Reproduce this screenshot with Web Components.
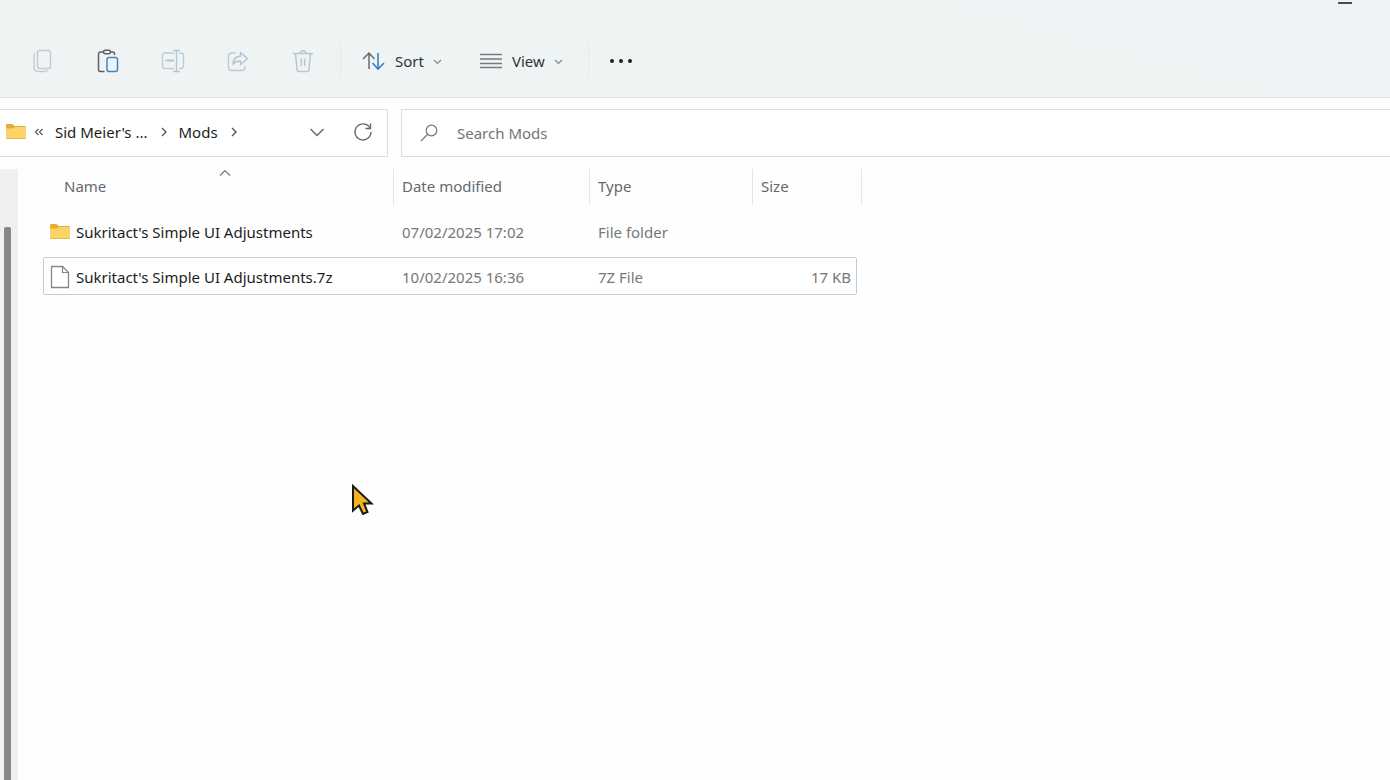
<!DOCTYPE html>
<html lang="en">
<head>
<meta charset="utf-8">
<title>Mods</title>
<style>
  html, body { margin: 0; height: 100%; }
  body { font: 15px/20px "Noto Sans", "Open Sans", sans-serif; color: #1c1c1c; background: #fefefe; overflow: hidden; }
</style>
</head>
<body>
<file-explorer></file-explorer>

<script>
const svg = (w, h, body, extra = "") =>
  `<svg width="${w}" height="${h}" viewBox="0 0 ${w} ${h}" fill="none" aria-hidden="true" ${extra}>${body}</svg>`;

const icons = {
  copy: svg(24, 24, `<g stroke="#bfcbd3" stroke-width="1.4"><rect x="6.500" y="1.500" width="13" height="18" rx="2"/><path d="M4 4.500C3.300 5 3 5.500 3 6.500V18.500C3 21 4.500 22.500 7 22.500H13.500C15 22.500 16 22 16.500 21"/></g>`),
  paste: svg(24, 24, `<g stroke-width="1.5"><path stroke="#5d6062" d="M7.500 3H4.500A2 2 0 0 0 2.500 5V20.500A2 2 0 0 0 4.500 22.500H8.500M14.500 3H16.500A2 2 0 0 1 18.500 5V6"/><rect stroke="#5d6062" x="7.500" y="1.300" width="7" height="3.400" rx="1.700"/><rect stroke="#3b86c8" x="11" y="8.500" width="10.500" height="14" rx="2"/></g>`),
  rename: svg(24, 24, `<g stroke="#bfccd8" stroke-width="1.4"><path d="M13 4H4A2.500 2.500 0 0 0 1.500 6.500V17A2.500 2.500 0 0 0 4 19.500H13M18 4H20A2.500 2.500 0 0 1 22.500 6.500V17A2.500 2.500 0 0 1 20 19.500H18"/><path stroke-width="2" stroke="#b2c4d4" d="M4.500 11.500H13"/><path stroke="#b3c6da" d="M15.500 2V22M12 1.500H19M12 22.500H19"/></g>`),
  share: svg(24, 24, `<g stroke="#bfcbd3" stroke-width="1.400" stroke-linejoin="round"><path d="M10 4H5.500A3 3 0 0 0 2.500 7V18.500A3 3 0 0 0 5.500 21.500H16A3 3 0 0 0 19 18.500V17"/><path stroke="#b0c4d2" d="M14.500 3.500L21.500 9.500L14.500 15.500V12C11 12 8.500 13 7 15.500C7.200 10.500 10 7.300 14.500 7Z"/></g>`),
  trash: svg(24, 24, `<g stroke="#bcc6ca" stroke-width="1.500" stroke-linecap="round"><path d="M2.500 4.500H21.500M9 4.500C9 .8 15 .8 15 4.500M4.500 5L6 20A2.500 2.500 0 0 0 8.500 22.500H15.500A2.500 2.500 0 0 0 18 20L19.500 5M10.300 10V16.500M13.700 10V16.500"/></g>`),
  sort: svg(24, 24, `<path stroke="#656b70" stroke-width="1.500" d="M7 20V4M1 10L7 4L12.500 10"/><path stroke="#3581c6" stroke-width="1.600" d="M16 4V20M10.500 14L16 20L22 14"/>`),
  view: svg(24, 24, `<path stroke="#777b7e" stroke-width="1.500" d="M1 5.500H23M1 10H23M1 14.500H23M1 18.500H23"/>`),
  more: svg(24, 24, `<g fill="#202020"><circle cx="3" cy="12" r="2"/><circle cx="12" cy="12" r="2"/><circle cx="21" cy="12" r="2"/></g>`),
  tiny: svg(9, 9, `<path stroke="#85898b" stroke-width="1.200" d="M1 3L4.500 6.500L8 3"/>`, `class="tiny"`),
  down: svg(16, 16, `<path stroke="#686868" stroke-width="1.400" d="M1.500 5L8 11.500L14.500 5"/>`),
  up: svg(12, 8, `<path stroke="#777" stroke-width="1.200" d="M1 6.500L6 1.500L11 6.500"/>`),
  right: svg(8, 10, `<path stroke="#555" stroke-width="1.400" d="M2 1L6 5L2 9"/>`),
  back: svg(10, 10, `<path stroke="#555" stroke-width="1.200" d="M4.500 2L1.500 5L4.500 8M8.500 2L5.500 5L8.500 8"/>`),
  refresh: svg(20, 20, `<path stroke="#686868" stroke-width="1.400" d="M17 6A8 8 0 1 0 18 10M17.500 1.500V6.500H12.500"/>`),
  search: svg(18, 18, `<circle cx="11.500" cy="6.500" r="5.300" stroke="#777" stroke-width="1.200"/><path stroke="#777" stroke-width="1.200" d="M7.500 10.500L1 17"/>`),
  folder: svg(20, 18, `<path fill="#e3ae35" d="M0 2.500C0 1.500.5 1 1.500 1H6.500L8.500 3H18.500C19.500 3 20 3.500 20 4.500V8H0Z"/><path fill="#f9d567" d="M0 5.500H7L9 4H19C19.600 4 20 4.400 20 5V15C20 15.600 19.600 16 19 16H1C.4 16 0 15.600 0 15Z"/><path stroke="#e9bb46" d="M.5 15.500H19.500"/>`),
  file: svg(20, 24, `<path fill="#fff" stroke="#85888b" stroke-width="1.300" d="M1.500 1.500H12.500L18.500 7.500V22.500H1.500Z"/><path stroke="#85888b" stroke-width="1.200" d="M12.500 1.500V7.500H18.500"/>`),
  cursor: svg(24, 32, `<path fill="#f4b41c" stroke="#191919" stroke-width="2" d="M2 3V27.500L8 22.500L12 31L16.500 29L13 20.500H20.500Z"/>`)
};

const define = (name, html) => customElements.define(name, class extends HTMLElement {
  constructor() {
    super();
    const t = document.createElement("template");
    t.innerHTML = `<style>
      svg { display: block; flex: none; }
      button { font: inherit; color: inherit; background: none; border: 0; padding: 0; margin: 0; display: flex; align-items: center; }
    </style>` + (typeof html === "function" ? html(this) : html);
    this.attachShadow({ mode: "open" }).append(t.content);
  }
});

define("window-caption", `
  <style>
    :host { display: flex; justify-content: flex-end; height: 25px; padding-right: 22px; }
    button { width: 46px; height: 6px; justify-content: center; }
    span { width: 14px; height: 2px; background: #4a4d52; }
  </style>
  <button type="button" aria-label="Minimise"><span></span></button>`);

define("tool-button", el => `
  <style>
    :host { display: block; }
    button { justify-content: center; width: 65px; height: 48px; }
    :host([menu]) button { justify-content: start; gap: 9px; width: auto; color: #303336; }
  </style>
  <button type="button" aria-label="${el.getAttribute("label")}" ${el.hasAttribute("off") ? "disabled" : ""}>
    ${icons[el.getAttribute("icon")]}<slot></slot>${el.hasAttribute("menu") ? icons.tiny : ""}
  </button>`);

define("command-bar", `
  <style>
    :host { display: flex; align-items: center; height: 72px; padding-left: 10px; }
    i { width: 1px; height: 34px; background: #e3e8e8; }
    .tools { display: flex; padding-right: 5px; }
    .group { display: flex; gap: 37px; padding: 0 25px 0 21px; }
  </style>
  <div class="tools">
    <tool-button icon="copy" label="Copy" off></tool-button>
    <tool-button icon="paste" label="Paste"></tool-button>
    <tool-button icon="rename" label="Rename" off></tool-button>
    <tool-button icon="share" label="Share" off></tool-button>
    <tool-button icon="trash" label="Delete" off></tool-button>
  </div>
  <i></i>
  <div class="group">
    <tool-button icon="sort" label="Sort" menu>Sort</tool-button>
    <tool-button icon="view" label="View" menu>View</tool-button>
  </div>
  <i></i>
  <tool-button icon="more" label="See more"></tool-button>`);

define("address-bar", `
  <style>
    :host { box-sizing: border-box; display: flex; align-items: center; width: 388px; height: 48px; padding: 0 14px 2px 6px; border: solid #dcdfe0; border-width: 1px 1px 1px 0; background: #fff; }
    nav { flex: 1; display: flex; align-items: center; }
    nav svg:first-child { margin-right: 8px; }
    a { color: #1c1c1c; text-decoration: none; white-space: nowrap; padding: 0 12px 0 11px; }
    .tools { display: flex; gap: 28px; }
  </style>
  <nav aria-label="Address">${icons.folder}${icons.back}<a href="#game">Sid Meier's ...</a>${icons.right}<a href="#mods">Mods</a>${icons.right}</nav>
  <div class="tools">
    <button type="button" aria-label="Previous locations">${icons.down}</button>
    <button type="button" aria-label="Refresh">${icons.refresh}</button>
  </div>`);

define("search-box", `
  <style>
    :host { box-sizing: border-box; flex: 1; display: flex; align-items: center; gap: 19px; height: 48px; padding-left: 18px; border: solid #dcdfe0; border-width: 1px 0 1px 1px; background: #fff; }
    input { flex: 1; min-width: 0; font: inherit; color: inherit; border: 0; padding: 0; outline: 0; background: none; }
    input::placeholder { color: #747474; opacity: 1; }
  </style>
  ${icons.search}<input type="search" aria-label="Search Mods" placeholder="Search Mods">`);

define("side-scroll", `
  <style>
    :host { box-sizing: border-box; flex: none; width: 18px; padding: 58px 7px 0 4px; background: #f0f0f0; }
    div { height: 100%; background: #868686; border-radius: 2px 2px 0 0; }
  </style>
  <div></div>`);

define("file-list", `
  <style>
    :host { display: block; flex: 1; padding-left: 25px; }
    table, thead, tbody { display: block; }
    tr { display: grid; grid-template-columns: 351px 196px 163px 1fr; align-items: center; box-sizing: border-box; }
    thead tr { width: 819px; height: 36px; }
    th { box-sizing: border-box; height: 36px; padding: 7px 8px; font-weight: 400; text-align: left; color: #65696d; border-right: 1px solid #e3e6e8; }
    th:first-child { position: relative; padding-left: 21px; }
    th svg { position: absolute; left: 176px; top: 0; }
    tbody { display: grid; gap: 7px; padding-top: 7px; }
    tbody tr { width: 814px; height: 38px; border: 1px solid transparent; border-radius: 2px; }
    tbody tr.focus { border-color: #b9d0da; background: #fff; }
    td { padding: 2px 7px 0; color: #777; white-space: nowrap; }
    td:first-child { display: flex; align-items: center; gap: 6px; padding: 2px 6px 0; color: #1c1c1c; }
    td:last-child { text-align: right; padding-right: 5px; }
  </style>
  <table>
    <thead><tr><th scope="col" aria-sort="ascending">Name${icons.up}</th><th scope="col">Date modified</th><th scope="col">Type</th><th scope="col">Size</th></tr></thead>
    <tbody>
      <tr><td>${icons.folder}Sukritact's Simple UI Adjustments</td><td>07/02/2025 17:02</td><td>File folder</td><td></td></tr>
      <tr class="focus"><td>${icons.file}Sukritact's Simple UI Adjustments.7z</td><td>10/02/2025 16:36</td><td>7Z File</td><td>17 KB</td></tr>
    </tbody>
  </table>`);

define("mouse-pointer", `
  <style>:host { position: absolute; left: 351px; top: 483px; pointer-events: none; }</style>
  ${icons.cursor}`);

define("file-explorer", `
  <style>
    :host { display: flex; flex-direction: column; height: 100vh; }
    header { background: linear-gradient(195deg, #eff2f7 0, #eef4f4 30%, #eff3f3 100%); border-bottom: 1px solid #dde1e1; }
    .bars { display: flex; gap: 13px; padding: 11px 0 12px; }
    main { flex: 1; display: flex; min-height: 0; }
  </style>
  <header><window-caption></window-caption><command-bar></command-bar></header>
  <div class="bars"><address-bar></address-bar><search-box></search-box></div>
  <main><side-scroll></side-scroll><file-list></file-list></main>
  <mouse-pointer></mouse-pointer>`);
</script>
</body>
</html>
